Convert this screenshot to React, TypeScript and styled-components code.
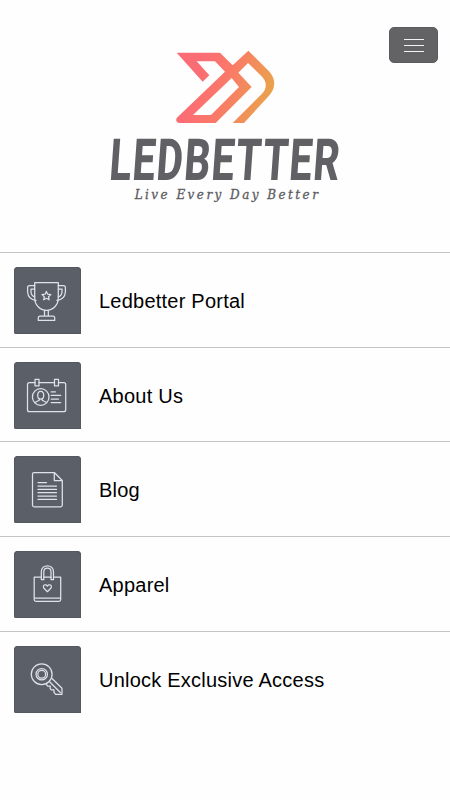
import React from "react";
import styled, { createGlobalStyle } from "styled-components";

const GlobalStyle = createGlobalStyle`
  * { box-sizing: border-box; }
  body { margin: 0; background: #fefefe; }
`;

const Screen = styled.main`
  width: 450px;
  height: 800px;
  overflow: hidden;
  background: #fefefe;
  display: flex;
  flex-direction: column;
  font-family: "Liberation Sans", Arial, sans-serif;
`;

const Header = styled.header`
  position: relative;
  height: 252px;
  flex: none;
  display: flex;
  flex-direction: column;
  align-items: center;
  padding-top: 40px;
`;

const MenuButton = styled.button`
  position: absolute;
  top: 27px;
  right: 12px;
  width: 49px;
  height: 36px;
  padding: 0;
  border: 1px solid #5c5c5f;
  border-radius: 5px;
  background: #636366;
  display: flex;
  flex-direction: column;
  align-items: center;
  justify-content: center;
  gap: 5px;
`;

const MenuBar = styled.span`
  width: 20px;
  height: 1px;
  background: #f4f4f4;
`;

const LogoMark = styled.svg`
  width: 120px;
  height: 95px;
  flex: none;
`;

const Wordmark = styled.div`
  height: 50px;
  line-height: 50px;
  font-family: Roboto, "Liberation Sans", sans-serif;
  font-weight: 800;
  font-size: 58px;
  letter-spacing: 2px;
  color: #616065;
  white-space: nowrap;
  transform: skewX(-4deg) scaleX(0.695);
`;

const Tagline = styled.div`
  height: 20px;
  line-height: 20px;
  margin-left: 5px;
  font-family: "DejaVu Serif", serif;
  font-style: italic;
  font-size: 12px;
  letter-spacing: 2.45px;
  color: #5c5b60;
  -webkit-text-stroke: 0.3px #5c5b60;
  white-space: nowrap;
`;

const Menu = styled.nav`
  display: flex;
  flex-direction: column;
`;

const Row = styled.a`
  height: 94.7px;
  flex: none;
  border-top: 1px solid #c3c3c3;
  padding: 14px 14px 0;
  display: flex;
  align-items: flex-start;
  gap: 18px;
  color: #000;
`;

const Tile = styled.span`
  width: 67px;
  height: 67px;
  flex: none;
  border-radius: 4px 4px 0 2px;
  background: #5b5f68;
  box-shadow: inset 0 0 0 1px #54585f;
`;

const Icon = styled.svg`
  display: block;
  width: 67px;
  height: 67px;
  fill: none;
  stroke: #dfe2e7;
  stroke-width: 1.25;
  stroke-linejoin: round;
  stroke-linecap: round;
`;

const Label = styled.span`
  font-size: 20px;
  letter-spacing: 0.23px;
  line-height: 67px;
  padding-top: 1px;
  white-space: nowrap;
`;

const Trophy = () => (
  <>
    <path d="M20.7 15.5H44.3V31C44.3 38 39 43.3 32.5 43.3S20.7 38 20.7 31Z" />
    <path d="M20.7 18.7H15.5Q13.6 18.7 13.6 20.6V25C14 30 16.5 32.8 22 33.4M20.7 22H17V25C17.2 27.7 18.3 29.2 20.7 29.8" />
    <path d="M44.3 18.7H49.5Q51.4 18.7 51.4 20.6V25C51 30 48.5 32.8 43 33.4M44.3 22H48V25C47.8 27.7 46.7 29.2 44.3 29.8" />
    <path d="M30.5 43.3V49M34.3 43.3V49M26 49H39Q40.7 49 40.7 51V53.4H24.3V51Q24.3 49 26 49Z" />
    <path d="M32.4 24.4L33.7 27.2L36.8 27.6L34.5 29.7L35.1 32.8L32.4 31.3L29.7 32.8L30.3 29.7L28 27.6L31.1 27.2Z" />
  </>
);

const Badge = () => (
  <>
    <path d="M21 20.7H15.5Q13.5 20.7 13.5 22.7V47.7Q13.5 49.7 15.5 49.7H49.7Q51.7 49.7 51.7 47.7V22.7Q51.7 20.7 49.7 20.7H44.5M25 20.7H40.5" />
    <rect x="21" y="17.3" width="4" height="6.5" />
    <rect x="40.5" y="17.3" width="4" height="6.5" />
    <circle cx="26.7" cy="35" r="8.3" />
    <ellipse cx="26.7" cy="33.2" rx="3" ry="3.9" />
    <path d="M25.3 36.8V38.3L20.8 40.5M28.1 36.8V38.3L32.6 40.5M37.2 29.9H41.4M37.2 33.4H46.7M37.2 37H44.5M37.2 40.6H46.7" />
  </>
);

const Article = () => (
  <>
    <path d="M20 16.5H40.3L48.3 24.5V49Q48.3 50.8 46.5 50.8H20.3Q18.5 50.8 18.5 49V18Q18.5 16.5 20 16.5ZM40.3 16.5V24.5H48.3" />
    <path d="M24 26.5H32.5M24 30H42.5M24 33.4H42.5M24 36.7H42.5M24 40H42.5M24 43.4H42.5" />
  </>
);

const Bag = () => (
  <>
    <path d="M27.3 26.2H20.2V48.6Q20.2 50.4 22 50.4H45Q46.7 50.4 46.7 48.6V26.2H39.5M29.8 26.2H37M20.2 47.1H46.7" />
    <path d="M27.3 28.6V21C27.3 12.7 39.5 12.7 39.5 21V28.6H37V21C37 15.9 29.8 15.9 29.8 21V28.6Z" />
    <path d="M33.4 40.7L30 37.3C28 34.5 31.6 32.2 33.4 35.2C35.2 32.2 38.8 34.5 36.8 37.3Z" />
  </>
);

const Key = () => (
  <>
    <circle cx="27.7" cy="28.2" r="10.4" />
    <circle cx="27.7" cy="28.2" r="5.7" />
    <circle cx="27.7" cy="28.2" r="3.9" />
    <path d="M38 32.5L48 42.3V48.3H41.7L40 46.4V43.8H37.3L36.2 42.5V40.2H34L32.3 38.4M35.8 36L46.3 46.5" />
  </>
);

const items = [
  { label: "Ledbetter Portal", Glyph: Trophy },
  { label: "About Us", Glyph: Badge },
  { label: "Blog", Glyph: Article },
  { label: "Apparel", Glyph: Bag },
  { label: "Unlock Exclusive Access", Glyph: Key },
];

export default function App() {
  return (
    <>
      <GlobalStyle />
      <Screen>
        <Header>
          <LogoMark viewBox="0 0 360 285">
            <defs>
              <linearGradient id="mark" gradientUnits="userSpaceOnUse" x1="100" y1="100" x2="310" y2="165">
                <stop offset="0" stopColor="#fb6d74" />
                <stop offset="0.4" stopColor="#fa7968" />
                <stop offset="1" stopColor="#eba04e" />
              </linearGradient>
            </defs>
            <path
              fill="url(#mark)"
              fillRule="evenodd"
              d="M35 38H165L203 76L250 32L312 94C333 117 333 143 312 167L237 249H203L291 161C306 146 306 126 292 111L249 69L220 98L260 141L152 249H42Q30 247 35 234L180 95L150 64H95L133 106L113 125ZM200 114L84 225H138L222 141Z"
            />
          </LogoMark>
          <Wordmark>LEDBETTER</Wordmark>
          <Tagline>Live Every Day Better</Tagline>
          <MenuButton aria-label="Menu">
            <MenuBar />
            <MenuBar />
            <MenuBar />
          </MenuButton>
        </Header>
        <Menu>
          {items.map(({ label, Glyph }) => (
            <Row key={label}>
              <Tile>
                <Icon viewBox="0 0 67 67">
                  <Glyph />
                </Icon>
              </Tile>
              <Label>{label}</Label>
            </Row>
          ))}
        </Menu>
      </Screen>
    </>
  );
}
